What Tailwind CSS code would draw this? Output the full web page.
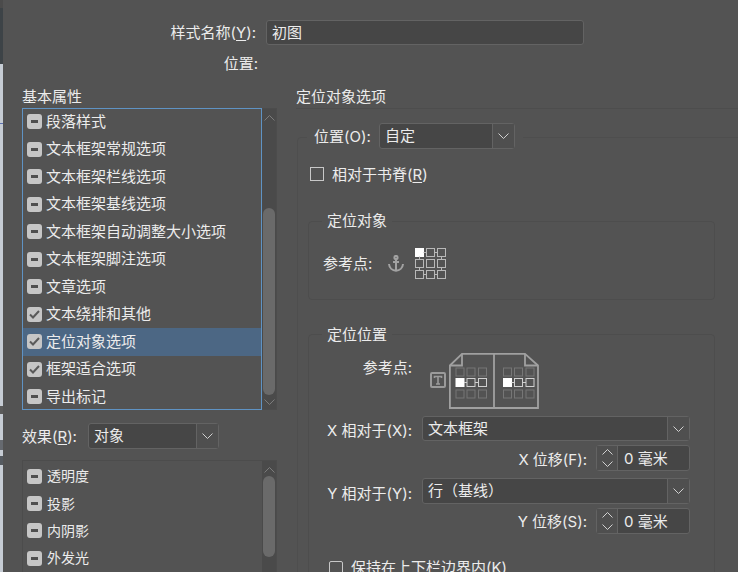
<!DOCTYPE html>
<html lang="en">
<head>
    <meta charset="UTF-8">
    <title>样式选项</title>
    <script src="https://cdn.jsdelivr.net/npm/@tailwindcss/browser@4"></script>
</head>
<body class="h-[572px] w-[738px] overflow-hidden bg-[#535353] text-[15px] leading-[20px] text-[#ececec] [font-family:'Inter','Noto_Sans_CJK_SC',sans-serif]">
<div class="flex h-[572px] overflow-hidden">
    <!-- window behind the dialog -->
    <div class="flex h-full w-[3px] shrink-0 flex-col">
        <div class="h-[8px] bg-[#4b4b4b]"></div>
        <div class="h-[56px] bg-[#3d4347]"></div>
        <div class="h-[59px] bg-[#c6ccd4]"></div>
        <div class="h-px bg-[#5b70b0]"></div>
        <div class="h-[282px] bg-[#c6ccd4]"></div>
        <div class="h-[8px] bg-[#5a5a5a]"></div>
        <div class="h-[26px] bg-[#c6ccd4]"></div>
        <div class="h-[10px] bg-[#666a70]"></div>
        <div class="h-[6px] bg-[#c6ccd4]"></div>
        <div class="h-[9px] bg-[#555a60]"></div>
        <div class="flex-1 bg-[#c6ccd4]"></div>
    </div>

    <div class="flex-1 pt-[20px]">
        <div class="flex h-[25px] items-center">
            <div class="w-[253px] pt-px text-right">样式名称(<span class="underline underline-offset-2">Y</span>):</div>
            <div class="ml-[10px] flex h-[25px] w-[318px] items-center rounded-[3px] border border-[#636363] bg-[#464646] pl-[5px]">初图</div>
        </div>
        <div class="mt-[9px] w-[255px] text-right">位置:</div>

        <div class="mt-[12px] flex">
            <!-- left column -->
            <div class="ml-[19px] w-[255px] shrink-0">
                <div class="h-[20px] pt-px">基本属性</div>
                <div class="mt-[2px] flex h-[302px] border border-[#4c4c4c]">
                    <div class="h-[302px] w-[240px] -ml-px -mt-px shrink-0 overflow-hidden border border-[#5f93c4]">
                        <div class="-mt-[1px]">
                            <div class="flex h-[27.5px] items-center pl-[4px]"><span class="flex h-[15px] w-[15px] items-center justify-center rounded-[3px] bg-[#c6c6c6]"><span class="h-[3px] w-[7px] bg-[#4f4f4f]"></span></span><span class="ml-[4px]">段落样式</span></div>
                            <div class="flex h-[27.5px] items-center pl-[4px]"><span class="flex h-[15px] w-[15px] items-center justify-center rounded-[3px] bg-[#c6c6c6]"><span class="h-[3px] w-[7px] bg-[#4f4f4f]"></span></span><span class="ml-[4px]">文本框架常规选项</span></div>
                            <div class="flex h-[27.5px] items-center pl-[4px]"><span class="flex h-[15px] w-[15px] items-center justify-center rounded-[3px] bg-[#c6c6c6]"><span class="h-[3px] w-[7px] bg-[#4f4f4f]"></span></span><span class="ml-[4px]">文本框架栏线选项</span></div>
                            <div class="flex h-[27.5px] items-center pl-[4px]"><span class="flex h-[15px] w-[15px] items-center justify-center rounded-[3px] bg-[#c6c6c6]"><span class="h-[3px] w-[7px] bg-[#4f4f4f]"></span></span><span class="ml-[4px]">文本框架基线选项</span></div>
                            <div class="flex h-[27.5px] items-center pl-[4px]"><span class="flex h-[15px] w-[15px] items-center justify-center rounded-[3px] bg-[#c6c6c6]"><span class="h-[3px] w-[7px] bg-[#4f4f4f]"></span></span><span class="ml-[4px]">文本框架自动调整大小选项</span></div>
                            <div class="flex h-[27.5px] items-center pl-[4px]"><span class="flex h-[15px] w-[15px] items-center justify-center rounded-[3px] bg-[#c6c6c6]"><span class="h-[3px] w-[7px] bg-[#4f4f4f]"></span></span><span class="ml-[4px]">文本框架脚注选项</span></div>
                            <div class="flex h-[27.5px] items-center pl-[4px]"><span class="flex h-[15px] w-[15px] items-center justify-center rounded-[3px] bg-[#c6c6c6]"><span class="h-[3px] w-[7px] bg-[#4f4f4f]"></span></span><span class="ml-[4px]">文章选项</span></div>
                            <div class="flex h-[27.5px] items-center pl-[4px]"><span class="flex h-[15px] w-[15px] items-center justify-center rounded-[3px] bg-[#c6c6c6]"><svg width="11" height="9" viewBox="0 0 11 9" fill="none" stroke="#5a5a5a" stroke-width="2"><path d="M1 4.5 4 7.5 10 1"/></svg></span><span class="ml-[4px]">文本绕排和其他</span></div>
                            <div class="flex h-[27.5px] items-center bg-[#4c6784] pl-[4px]"><span class="flex h-[15px] w-[15px] items-center justify-center rounded-[3px] bg-[#c6c6c6]"><svg width="11" height="9" viewBox="0 0 11 9" fill="none" stroke="#5a5a5a" stroke-width="2"><path d="M1 4.5 4 7.5 10 1"/></svg></span><span class="ml-[4px]">定位对象选项</span></div>
                            <div class="flex h-[27.5px] items-center pl-[4px]"><span class="flex h-[15px] w-[15px] items-center justify-center rounded-[3px] bg-[#c6c6c6]"><svg width="11" height="9" viewBox="0 0 11 9" fill="none" stroke="#5a5a5a" stroke-width="2"><path d="M1 4.5 4 7.5 10 1"/></svg></span><span class="ml-[4px]">框架适合选项</span></div>
                            <div class="flex h-[27.5px] items-center pl-[4px]"><span class="flex h-[15px] w-[15px] items-center justify-center rounded-[3px] bg-[#c6c6c6]"><span class="h-[3px] w-[7px] bg-[#4f4f4f]"></span></span><span class="ml-[4px]">导出标记</span></div>
                        </div>
                    </div>
                    <div class="flex h-full flex-1 flex-col items-center bg-[#4a4a4a] pt-[6px]">
                        <svg width="11" height="6" viewBox="0 0 11 6" fill="none" stroke="#7c7c7c"><path d="M.5 5.5 5.5.5l5 5"/></svg>
                        <div class="mt-[87px] h-[187px] w-[12px] rounded-[6px] bg-[#6a6a6a]"></div>
                        <svg class="mt-[4px]" width="11" height="6" viewBox="0 0 11 6" fill="none" stroke="#7c7c7c"><path d="M.5.5l5 5 5-5"/></svg>
                    </div>
                </div>

                <div class="mt-[13px] flex h-[26px] items-center">
                    <div class="w-[66px] pt-px">效果(<span class="underline underline-offset-2">R</span>):</div>
                    <div class="flex h-[26px] w-[131px] rounded-[3px] border border-[#636363] bg-[#464646]">
                        <div class="flex-1 pl-[5px] leading-[23px]">对象</div>
                        <div class="flex w-[22px] items-center justify-center border-l border-[#636363] bg-[#4f4f4f]"><svg width="11" height="6" viewBox="0 0 11 6" fill="none" stroke="#d0d0d0"><path d="M.5.5l5 5 5-5"/></svg></div>
                    </div>
                </div>

                <div class="mt-[11px] flex h-[130px] border border-[#4c4c4c]">
                    <div class="w-[239px] shrink-0 pt-[1.5px] text-[14px]">
                        <div class="flex h-[27.4px] items-center pl-[4px]"><span class="flex h-[15px] w-[15px] items-center justify-center rounded-[3px] bg-[#c6c6c6]"><span class="h-[3px] w-[7px] bg-[#4f4f4f]"></span></span><span class="ml-[5px]">透明度</span></div>
                        <div class="flex h-[27.4px] items-center pl-[4px]"><span class="flex h-[15px] w-[15px] items-center justify-center rounded-[3px] bg-[#c6c6c6]"><span class="h-[3px] w-[7px] bg-[#4f4f4f]"></span></span><span class="ml-[5px]">投影</span></div>
                        <div class="flex h-[27.4px] items-center pl-[4px]"><span class="flex h-[15px] w-[15px] items-center justify-center rounded-[3px] bg-[#c6c6c6]"><span class="h-[3px] w-[7px] bg-[#4f4f4f]"></span></span><span class="ml-[5px]">内阴影</span></div>
                        <div class="flex h-[27.4px] items-center pl-[4px]"><span class="flex h-[15px] w-[15px] items-center justify-center rounded-[3px] bg-[#c6c6c6]"><span class="h-[3px] w-[7px] bg-[#4f4f4f]"></span></span><span class="ml-[5px]">外发光</span></div>
                    </div>
                    <div class="flex h-full flex-1 flex-col items-center bg-[#4a4a4a] pt-[6px]">
                        <svg width="11" height="6" viewBox="0 0 11 6" fill="none" stroke="#7c7c7c"><path d="M.5 5.5 5.5.5l5 5"/></svg>
                        <div class="mt-[3px] h-[81px] w-[12px] rounded-[6px] bg-[#6a6a6a]"></div>
                    </div>
                </div>
            </div>

            <!-- right column -->
            <div class="ml-[19px] w-[460px] shrink-0">
                <div class="h-[23px] border-b border-[#4d4d4d] pt-px">定位对象选项</div>
                <div class="ml-px mt-[28px] w-[460px] rounded-[4px] border border-[#4e4e4e] pb-[60px]">
                    <div class="-mt-[15px] ml-[9px] flex h-[26px] w-fit items-center bg-[#535353] pl-[7px] pr-[8px]">
                        <div class="w-[65px] whitespace-nowrap pt-px">位置(O):</div>
                        <div class="flex h-[26px] w-[136px] rounded-[3px] border border-[#636363] bg-[#464646]">
                            <div class="flex-1 pl-[5px] leading-[23px]">自定</div>
                            <div class="flex w-[22px] items-center justify-center border-l border-[#636363] bg-[#4f4f4f]"><svg width="11" height="6" viewBox="0 0 11 6" fill="none" stroke="#d0d0d0"><path d="M.5.5l5 5 5-5"/></svg></div>
                        </div>
                    </div>

                    <div class="ml-[12px] mt-[18px] flex h-[14px] items-center">
                        <span class="h-[14px] w-[14px] border border-[#c8c8c8]"></span>
                        <span class="ml-[8px] pt-[2px]">相对于书脊(<span class="underline underline-offset-2">R</span>)</span>
                    </div>

                    <!-- 定位对象 -->
                    <div class="relative ml-[10px] mt-[40px] h-[79px] w-[407px] rounded-[4px] border border-[#4d4d4d]">
                        <div class="absolute -top-[11px] left-[13px] bg-[#535353] px-[5px]">定位对象</div>
                        <div class="flex items-center pl-[14px] pt-[26px]">
                            <div class="w-[65px] whitespace-nowrap">参考点:</div>
                            <svg width="16" height="17" viewBox="0 0 16 17" fill="none" stroke="#a2a2a2" stroke-width="2">
                                <circle cx="8" cy="2.5" r="1.6"/>
                                <path d="M8 4v12M5 7h6"/>
                                <path d="M1 9c.3 4 3.5 6.5 7 6.8 3.5-.3 6.7-2.8 7-6.8"/>
                            </svg>
                            <svg class="ml-[11px]" width="31" height="31" viewBox="0 0 31 31" fill="none" stroke="#b8b8b8">
                                <rect x=".5" y=".5" width="8" height="8" fill="#fff" stroke="#fff"/>
                                <rect x="11.5" y=".5" width="8" height="8"/><rect x="22.5" y=".5" width="8" height="8"/>
                                <rect x=".5" y="11.5" width="8" height="8"/><rect x="11.5" y="11.5" width="8" height="8"/><rect x="22.5" y="11.5" width="8" height="8"/>
                                <rect x=".5" y="22.5" width="8" height="8"/><rect x="11.5" y="22.5" width="8" height="8"/><rect x="22.5" y="22.5" width="8" height="8"/>
                                <path d="M8.5 4.5h3M19.5 4.5h3M8.5 26.5h3M19.5 26.5h3M4.5 8.5v3M4.5 19.5v3M26.5 8.5v3M26.5 19.5v3"/>
                            </svg>
                        </div>
                    </div>

                    <!-- 定位位置 -->
                    <div class="relative ml-[10px] mt-[34px] h-[260px] w-[407px] rounded-[4px] border border-[#4d4d4d]">
                        <div class="absolute -top-[10px] left-[13px] bg-[#535353] px-[5px]">定位位置</div>
                        <div class="mt-[18px] flex h-[55px]">
                            <div class="mt-[5px] w-[103px] whitespace-nowrap text-right">参考点:</div>
                            <svg class="ml-[18px] mt-[19px]" width="16" height="16" viewBox="0 0 16 16" fill="none" stroke="#9a9a9a">
                                <rect x="1" y="1" width="14" height="14" rx="1" stroke-width="2"/>
                                <path d="M4.5 6V4.5H11.5V6M8 4.5V12M6 12H10" stroke-width="1.6"/>
                            </svg>
                            <svg class="ml-[3px]" width="90" height="56" viewBox="0 0 90 56" fill="none" stroke="#a0a0a0" stroke-width="1.8">
                                <path d="M.9 12.5 13 .9H76L89 12.5V55H.9Z"/>
                                <path d="M13 .9V12.5H.9M76 .9V12.5H89M45 .9V55"/>
                                <g stroke="#767676" stroke-width="1">
                                    <rect x="7" y="15" width="8" height="8"/><rect x="18" y="15" width="8" height="8"/><rect x="29.5" y="15" width="8" height="8"/>
                                    <rect x="7" y="37" width="8" height="8"/><rect x="18" y="37" width="8" height="8"/><rect x="29.5" y="37" width="8" height="8"/>
                                    <rect x="54.5" y="15" width="8" height="8"/><rect x="65.5" y="15" width="8" height="8"/><rect x="77" y="15" width="8" height="8"/>
                                    <rect x="54.5" y="37" width="8" height="8"/><rect x="65.5" y="37" width="8" height="8"/><rect x="77" y="37" width="8" height="8"/>
                                </g>
                                <g stroke="#d0d0d0" stroke-width="1">
                                    <rect x="7" y="25.5" width="8" height="8" fill="#fff" stroke="#fff"/><rect x="18" y="25.5" width="8" height="8"/><rect x="29.5" y="25.5" width="8" height="8"/>
                                    <rect x="54.5" y="25.5" width="8" height="8" fill="#fff" stroke="#fff"/><rect x="65.5" y="25.5" width="8" height="8"/><rect x="77" y="25.5" width="8" height="8"/>
                                    <path d="M15 29.5h3M26 29.5h3.5M62.5 29.5h3M73.5 29.5h3.5"/>
                                </g>
                            </svg>
                        </div>

                        <div class="mt-[8px] flex h-[25px] w-[381px] items-center">
                            <div class="w-[103px] whitespace-nowrap pt-[5px] text-right">X 相对于(X):</div>
                            <div class="ml-[10px] flex h-[25px] flex-1 rounded-[3px] border border-[#636363] bg-[#464646]">
                                <div class="flex-1 pl-[5px] leading-[23px]">文本框架</div>
                                <div class="flex w-[22px] items-center justify-center border-l border-[#636363] bg-[#4f4f4f]"><svg width="11" height="6" viewBox="0 0 11 6" fill="none" stroke="#d0d0d0"><path d="M.5.5l5 5 5-5"/></svg></div>
                            </div>
                        </div>
                        <div class="mt-[4px] flex h-[26px] w-[381px] items-center justify-end">
                            <div class="pt-[3px]">X 位移(F):</div>
                            <div class="ml-[9px] flex h-[26px] w-[94px] rounded-[3px] border border-[#636363] bg-[#464646]">
                                <div class="flex w-[21px] flex-col items-center justify-center gap-[6px] border-r border-[#636363] bg-[#4f4f4f]">
                                    <svg width="11" height="6" viewBox="0 0 11 6" fill="none" stroke="#d0d0d0"><path d="M.5 5.5 5.5.5l5 5"/></svg>
                                    <svg width="11" height="6" viewBox="0 0 11 6" fill="none" stroke="#d0d0d0"><path d="M.5.5l5 5 5-5"/></svg>
                                </div>
                                <div class="flex-1 pl-[6px] leading-[25px]">0 毫米</div>
                            </div>
                        </div>
                        <div class="mt-[7px] flex h-[26px] w-[381px] items-center">
                            <div class="w-[103px] whitespace-nowrap pt-[5px] text-right">Y 相对于(Y):</div>
                            <div class="ml-[10px] flex h-[26px] flex-1 rounded-[3px] border border-[#636363] bg-[#464646]">
                                <div class="flex-1 pl-[5px] leading-[23px]">行（基线）</div>
                                <div class="flex w-[22px] items-center justify-center border-l border-[#636363] bg-[#4f4f4f]"><svg width="11" height="6" viewBox="0 0 11 6" fill="none" stroke="#d0d0d0"><path d="M.5.5l5 5 5-5"/></svg></div>
                            </div>
                        </div>
                        <div class="mt-[4px] flex h-[26px] w-[381px] items-center justify-end">
                            <div class="pt-[2px]">Y 位移(S):</div>
                            <div class="ml-[9px] flex h-[26px] w-[94px] rounded-[3px] border border-[#636363] bg-[#464646]">
                                <div class="flex w-[21px] flex-col items-center justify-center gap-[6px] border-r border-[#636363] bg-[#4f4f4f]">
                                    <svg width="11" height="6" viewBox="0 0 11 6" fill="none" stroke="#d0d0d0"><path d="M.5 5.5 5.5.5l5 5"/></svg>
                                    <svg width="11" height="6" viewBox="0 0 11 6" fill="none" stroke="#d0d0d0"><path d="M.5.5l5 5 5-5"/></svg>
                                </div>
                                <div class="flex-1 pl-[6px] leading-[25px]">0 毫米</div>
                            </div>
                        </div>

                        <div class="ml-[20px] mt-[27px] flex h-[14px] items-center">
                            <span class="h-[14px] w-[14px] rounded-[2px] border border-[#c8c8c8]"></span>
                            <span class="ml-[8px]">保持在上下栏边界内(K)</span>
                        </div>
                    </div>
                </div>
            </div>
        </div>
    </div>
</div>
</body>
</html>
